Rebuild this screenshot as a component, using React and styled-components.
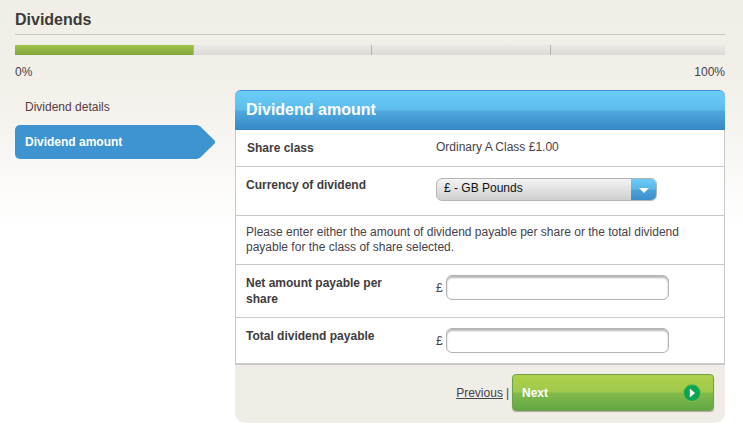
import styled, { createGlobalStyle } from "styled-components";

const GlobalStyle = createGlobalStyle`
  html, body {
    margin: 0;
    padding: 0;
    background: #fff;
  }
  body {
    font-family: "Liberation Sans", Arial, sans-serif;
    font-size: 12px;
    color: #3d3a3c;
  }
`;

const Page = styled.div`
  width: 743px;
  height: 432px;
  box-sizing: border-box;
  padding: 0 18px 0 15px;
  overflow: hidden;
  background: linear-gradient(#f1eee7 0, #f3f0ea 90px, #fcfbf9 190px, #fff 230px);
`;

const Title = styled.h1`
  margin: 0;
  height: 35px;
  box-sizing: border-box;
  padding-top: 11px;
  border-bottom: 1px solid #c9c5bf;
  font-size: 16px;
  line-height: 18px;
  font-weight: bold;
  color: #3c3a3b;
`;

const Progress = styled.div`
  display: flex;
  height: 10px;
  margin-top: 10px;
  background: linear-gradient(#ebe9e6, #dddbd7);
`;

const Segment = styled.div`
  flex: none;
  width: 178.7px;
  box-sizing: border-box;
  border-right: 1px solid #b5b2ad;
  background: ${(p) => (p.$done ? "linear-gradient(#9dc446, #83a53c)" : "none")};
  &:last-child {
    flex: 1;
    border-right: 0;
  }
`;

const Scale = styled.div`
  display: flex;
  justify-content: space-between;
  margin-top: 10px;
  line-height: 14px;
  font-size: 12px;
  color: #45424a;
`;

const Columns = styled.div`
  display: flex;
  margin-top: 11px;
`;

const Side = styled.nav`
  width: 220px;
  flex: none;
  padding-top: 7px;
`;

const SideLink = styled.div`
  height: 28px;
  padding: 3px 0 0 10px;
  box-sizing: border-box;
  line-height: 14px;
  color: #58393f;
`;

const SideActive = styled.div`
  position: relative;
  width: 183px;
  height: 34px;
  padding-left: 10px;
  box-sizing: border-box;
  border-radius: 5px 0 0 5px;
  background: #3d94d1;
  color: #fff;
  font-weight: bold;
  line-height: 34px;
  &::after {
    content: "";
    position: absolute;
    left: 172px;
    top: 5px;
    width: 24px;
    height: 24px;
    border-radius: 2px;
    background: #3d94d1;
    transform: rotate(45deg);
  }
`;

const Panel = styled.section`
  width: 490px;
  flex: none;
  border-radius: 6px 6px 10px 10px;
  background: #f0ede6;
`;

const PanelHead = styled.h2`
  margin: 0;
  height: 40px;
  box-sizing: border-box;
  padding: 0 0 0 11px;
  border-top: 1px solid #3c91d6;
  border-radius: 6px 6px 0 0;
  background: linear-gradient(#6ccdf9 0, #5cbcec 49%, #50a9dd 51%, #3587c6 100%);
  color: #fff;
  font-size: 16px;
  line-height: 37px;
  font-weight: bold;
`;

const Body = styled.div`
  background: #fff;
  border: 1px solid #c9c9c9;
  border-top: 0;
`;

const Row = styled.div`
  display: flex;
  height: ${(p) => p.$h}px;
  box-sizing: border-box;
  border-bottom: 1px solid #c9c9c9;
  padding-left: 10px;
`;

const Label = styled.div`
  width: 190px;
  flex: none;
  padding-top: ${(p) => p.$top}px;
  padding-left: ${(p) => p.$left || 0}px;
  box-sizing: border-box;
  line-height: 16px;
  font-weight: bold;
  color: #3f3c3e;
`;

const Value = styled.div`
  padding-top: 10px;
  line-height: 14px;
  color: #45424a;
`;

const Field = styled.div`
  display: flex;
  align-items: center;
  height: 26px;
  margin-top: ${(p) => p.$top}px;
  color: #45424a;
`;

const Select = styled.div`
  display: flex;
  width: 221px;
  height: 23px;
  box-sizing: border-box;
  margin-top: 11px;
  border: 1px solid #b4b4b4;
  border-radius: 6px;
  overflow: hidden;
  background: linear-gradient(#f4f4f4, #cfcfcf);
  color: #111;
`;

const SelectText = styled.div`
  flex: 1;
  padding-left: 7px;
  line-height: 19px;
`;

const SelectButton = styled.div`
  width: 26px;
  margin: -1px -1px -1px 0;
  background: linear-gradient(#6ccdf9 0, #59b6e8 49%, #4da4d8 51%, #3a8cc8 100%);
  display: flex;
  align-items: center;
  justify-content: center;
  &::after {
    content: "";
    border-top: 5px solid #fff;
    border-left: 5px solid transparent;
    border-right: 5px solid transparent;
    margin-top: 1px;
  }
`;

const Info = styled.p`
  margin: 0;
  padding: 9px 10px 0 0;
  line-height: 14.5px;
  color: #45424a;
`;

const Pound = styled.span`
  width: 10px;
  flex: none;
  padding-top: 2px;
`;

const Input = styled.input`
  width: 223px;
  height: 25px;
  box-sizing: border-box;
  border: 1px solid #b2b2b2;
  border-radius: 6px;
  background: #fff;
  box-shadow: inset 0 2px 2px #b8b8b8;
  outline: none;
`;

const Footer = styled.div`
  display: flex;
  justify-content: flex-end;
  align-items: flex-start;
  height: 58px;
  box-sizing: border-box;
  padding: 9px 11px 0 0;
  gap: 3px;
  color: #45424a;
`;

const FooterText = styled.span`
  margin-top: 12px;
  line-height: 14px;
`;

const PrevLink = styled.a`
  color: #45424a;
  text-decoration: underline;
`;

const NextButton = styled.button`
  display: flex;
  align-items: center;
  justify-content: space-between;
  width: 202px;
  height: 37px;
  box-sizing: border-box;
  padding: 0 12px 0 9px;
  border: 1px solid #6f9f4d;
  border-radius: 4px;
  background: linear-gradient(#aed24c 0, #a0c84b 49%, #82ba4a 51%, #62a745 100%);
  box-shadow: 0 1px 1px #a9a9a0;
  color: #fff;
  font-family: inherit;
  font-size: 12px;
  font-weight: bold;
`;

const NextIcon = () => (
  <svg width="18" height="18" viewBox="0 0 18 18">
    <circle cx="9" cy="9" r="8.5" fill="#0ba551" stroke="#7cc04a" />
    <path d="M6.8 4.6 L12 9 L6.8 13.4 Z" fill="#fff" />
  </svg>
);

export default function App() {
  return (
    <>
      <GlobalStyle />
      <Page>
        <Title>Dividends</Title>
        <Progress>
          <Segment $done />
          <Segment />
          <Segment />
          <Segment />
        </Progress>
        <Scale>
          <span>0%</span>
          <span>100%</span>
        </Scale>
        <Columns>
          <Side>
            <SideLink>Dividend details</SideLink>
            <SideActive>Dividend amount</SideActive>
          </Side>
          <Panel>
            <PanelHead>Dividend amount</PanelHead>
            <Body>
              <Row $h={37}>
                <Label $top={10} $left={1}>Share class</Label>
                <Value>Ordinary A Class £1.00</Value>
              </Row>
              <Row $h={49}>
                <Label $top={10}>Currency of dividend</Label>
                <Select>
                  <SelectText>£ - GB Pounds</SelectText>
                  <SelectButton />
                </Select>
              </Row>
              <Row $h={49}>
                <Info>
                  Please enter either the amount of dividend payable per share or the total dividend
                  payable for the class of share selected.
                </Info>
              </Row>
              <Row $h={53}>
                <Label $top={10}>
                  Net amount payable per
                  <br />
                  share
                </Label>
                <Field $top={9}>
                  <Pound>£</Pound>
                  <Input />
                </Field>
              </Row>
              <Row $h={46}>
                <Label $top={10}>Total dividend payable</Label>
                <Field $top={9}>
                  <Pound>£</Pound>
                  <Input />
                </Field>
              </Row>
            </Body>
            <Footer>
              <FooterText>
                <PrevLink>Previous</PrevLink>
              </FooterText>
              <FooterText>|</FooterText>
              <NextButton>
                <span>Next</span>
                <NextIcon />
              </NextButton>
            </Footer>
          </Panel>
        </Columns>
      </Page>
    </>
  );
}
